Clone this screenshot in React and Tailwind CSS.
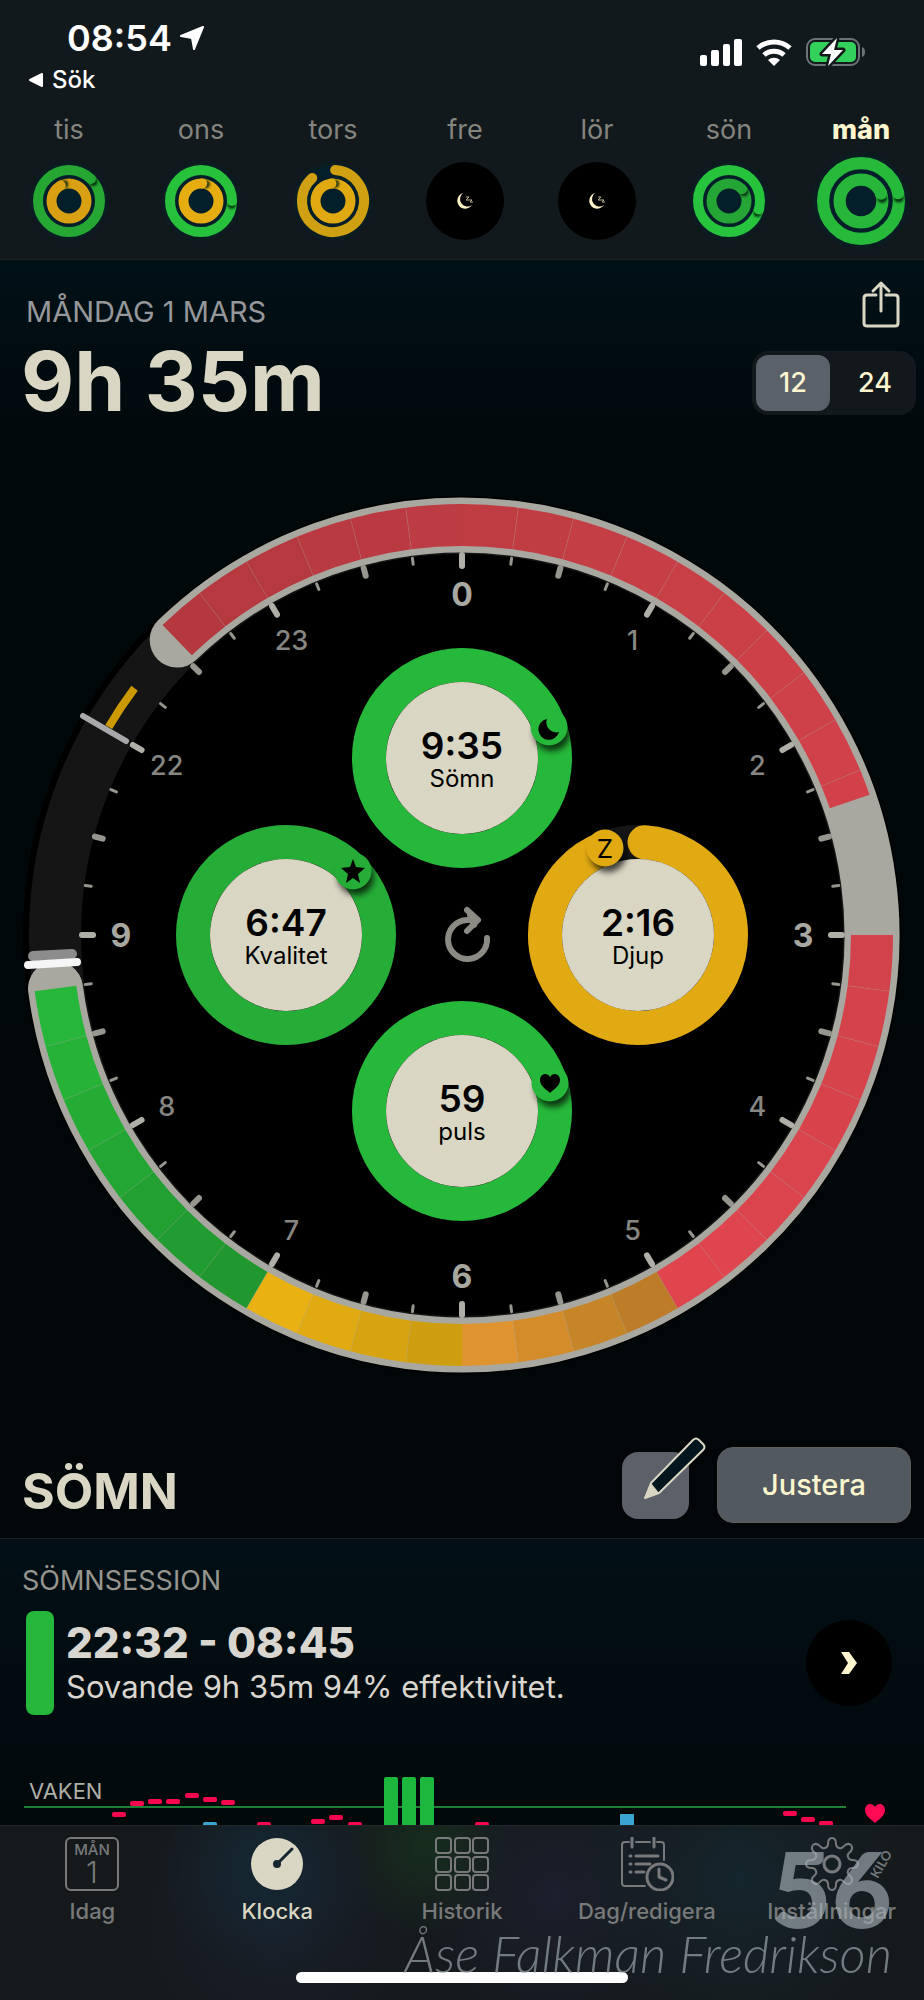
const days = [
  { label: "tis", outer: { color: "#26a733", end: 45 }, inner: { color: "#d8a012", end: -28 } },
  { label: "ons", outer: { color: "#28c13c", end: 90 }, inner: { color: "#e6ad12", end: 4 } },
  { label: "tors", outer: { color: "#d0a013", end: -42, open: true }, inner: { color: "#e0a912", end: -5 } },
  { label: "fre" },
  { label: "lör" },
  { label: "sön", outer: { color: "#28c33d", end: 106 }, inner: { color: "#25a535", end: 48 } },
  { label: "mån", active: true, outer: { color: "#27b93a", end: 78 }, inner: { color: "#27b53a", end: 70 } },
];

const CX = 462;
const CY = 935;

const segments = [
  { from: -44, to: -37.5, color: "#b4383e" },
  { from: -37.5, to: -30, color: "#b5393f" },
  { from: -30, to: -22.5, color: "#b73940" },
  { from: -22.5, to: -15, color: "#b93a40" },
  { from: -15, to: -7.5, color: "#bb3a41" },
  { from: -7.5, to: 0, color: "#bd3b42" },
  { from: 0, to: 7.5, color: "#bf3c43" },
  { from: 7.5, to: 15, color: "#c13d44" },
  { from: 15, to: 22.5, color: "#c43e45" },
  { from: 22.5, to: 30, color: "#c73f46" },
  { from: 30, to: 37.5, color: "#c93f46" },
  { from: 37.5, to: 45, color: "#cb4047" },
  { from: 45, to: 52.5, color: "#cd4047" },
  { from: 52.5, to: 60, color: "#cf4148" },
  { from: 60, to: 67.5, color: "#d14149" },
  { from: 67.5, to: 71, color: "#d24149" },
  { from: 90, to: 97.5, color: "#d2424a" },
  { from: 97.5, to: 105, color: "#d4434b" },
  { from: 105, to: 112.5, color: "#d6434b" },
  { from: 112.5, to: 120, color: "#d8434b" },
  { from: 120, to: 127.5, color: "#da444c" },
  { from: 127.5, to: 135, color: "#dc444d" },
  { from: 135, to: 142.5, color: "#de454e" },
  { from: 142.5, to: 150, color: "#e0454e" },
  { from: 150, to: 157.5, color: "#bd7c27" },
  { from: 157.5, to: 165, color: "#c78529" },
  { from: 165, to: 172.5, color: "#d48c2b" },
  { from: 172.5, to: 180, color: "#e0942f" },
  { from: 180, to: 187.5, color: "#cf9d10" },
  { from: 187.5, to: 195, color: "#d8a311" },
  { from: 195, to: 202.5, color: "#e1aa11" },
  { from: 202.5, to: 210, color: "#eab112" },
  { from: 210, to: 217.5, color: "#21972f" },
  { from: 217.5, to: 225, color: "#219c30" },
  { from: 225, to: 232.5, color: "#22a132" },
  { from: 232.5, to: 240, color: "#23a633" },
  { from: 240, to: 247.5, color: "#24ac35" },
  { from: 247.5, to: 255, color: "#25b237" },
  { from: 255, to: 262.5, color: "#26b639" },
];

const hours = [
  { label: "0", angle: 0 },
  { label: "1", angle: 30 },
  { label: "2", angle: 60 },
  { label: "3", angle: 90 },
  { label: "4", angle: 120 },
  { label: "5", angle: 150 },
  { label: "6", angle: 180 },
  { label: "7", angle: 210 },
  { label: "8", angle: 240 },
  { label: "9", angle: 270 },
  { label: "22", angle: 300 },
  { label: "23", angle: 330 },
];

const metrics = [
  { value: "9:35", label: "Sömn", x: 462, y: 758, color: "#26b83a", badge: { x: 549, y: 727, icon: "moon" } },
  { value: "6:47", label: "Kvalitet", x: 286, y: 935, color: "#25ad37", badge: { x: 353, y: 871, icon: "star" } },
  { value: "2:16", label: "Djup", x: 638, y: 935, color: "#e2aa12", open: true, badge: { x: 605, y: 848, icon: "z" } },
  { value: "59", label: "puls", x: 462, y: 1111, color: "#26b83a", badge: { x: 550, y: 1083, icon: "heart" } },
];

const pulses = [
  [119, 1814], [137, 1803], [155, 1801], [173, 1801], [192, 1795], [210, 1799], [228, 1802],
  [264, 1824], [318, 1821], [336, 1817], [355, 1824], [482, 1824], [790, 1813], [808, 1819], [826, 1823],
];

const HEART = "M0 9 C-3 6 -10 2 -10 -4 C-10 -8 -7 -10 -5 -10 C-3 -10 -1 -9 0 -7 C1 -9 3 -10 5 -10 C7 -10 10 -8 10 -4 C10 2 3 6 0 9 Z";

function polar(cx, cy, r, angle) {
  const a = (angle * Math.PI) / 180;
  return [cx + r * Math.sin(a), cy - r * Math.cos(a)];
}

function arc(cx, cy, r, from, to) {
  const [x1, y1] = polar(cx, cy, r, from);
  const [x2, y2] = polar(cx, cy, r, to);
  return `M${x1} ${y1} A${r} ${r} 0 ${to - from > 180 ? 1 : 0} 1 ${x2} ${y2}`;
}

function SmallRing({ r, color, end, open }) {
  const [x, y] = polar(0, 0, r, end);
  const [sx, sy] = polar(0, 0, r, end + (r > 20 ? 7 : 12));
  return (
    <g>
      {open ? (
        <path d={arc(0, 0, r, 4, 360 + end)} fill="none" stroke={color} strokeWidth="10" strokeLinecap="round" />
      ) : (
        <>
          <circle r={r} fill="none" stroke={color} strokeWidth="10" />
          <circle cx={sx} cy={sy} r="4" fill="#021" opacity="0.85" filter="url(#tight)" />
          <circle cx={x} cy={y} r="5" fill={color} />
        </>
      )}
    </g>
  );
}

function DayRings({ day }) {
  if (!day.outer) {
    return (
      <svg viewBox="-44 -44 88 88" className="size-[88px]" aria-hidden="true">
        <circle r="39" fill="#000" />
        <path d="M-2 -8 A8 8 0 1 0 7 4 A7 7 0 0 1 -2 -8 Z" fill="#fff3c9" />
        <path d="M1 -4 h3 l-3 3 h3 M4 -1 h3 l-2 2 h3" fill="none" stroke="#b8b092" strokeWidth="1" />
      </svg>
    );
  }
  return (
    <svg
      viewBox={day.active ? "-36 -36 72 72" : "-44 -44 88 88"}
      className="size-[88px] overflow-visible"
      aria-hidden="true"
    >
      <circle r="37" fill="#03202a" filter="url(#soft)" />
      <circle r="35" fill="#03202a" />
      <SmallRing r={31} {...day.outer} />
      <SmallRing r={17.5} {...day.inner} />
    </svg>
  );
}

function StatusIcons() {
  return (
    <svg viewBox="0 0 166 30" className="mt-[37px] mr-[58px] h-[30px] w-[166px]" aria-hidden="true">
      <g fill="#fff">
        <rect x="0" y="18" width="7" height="11" rx="2" />
        <rect x="11" y="13" width="8" height="16" rx="2" />
        <rect x="23" y="7" width="7" height="22" rx="2" />
        <rect x="34" y="2" width="8" height="27" rx="2" />
        <path d="M74 29 L68 23 A9 9 0 0 1 80 23 Z" />
      </g>
      <path d="M58 11 A24 24 0 0 1 90 11" fill="none" stroke="#fff" strokeWidth="5" />
      <path d="M64 18 A15 15 0 0 1 84 18" fill="none" stroke="#fff" strokeWidth="5" />
      <rect x="107" y="2" width="52" height="26" rx="8" fill="none" stroke="#6d7274" strokeWidth="2" />
      <path d="M162 10 C166 11 166 19 162 20 Z" fill="#6d7274" />
      <rect x="110" y="5" width="46" height="20" rx="5" fill="#33d15b" />
      <path
        d="M137 1 L122 17 H131 L128 29 L143 13 H134 Z"
        fill="#fff"
        stroke="#12191c"
        strokeWidth="5"
        strokeLinejoin="round"
        paintOrder="stroke"
      />
    </svg>
  );
}

function Header() {
  return (
    <header className="overflow-hidden border-b border-[#21211f] bg-[#12191c] pb-[14px]">
      <svg className="absolute size-0" aria-hidden="true">
        <defs>
          <filter id="soft" x="-50%" y="-50%" width="200%" height="200%">
            <feGaussianBlur stdDeviation="3" />
          </filter>
          <filter id="tight" x="-50%" y="-50%" width="200%" height="200%">
            <feGaussianBlur stdDeviation="1" />
          </filter>
        </defs>
      </svg>
      <div className="flex justify-between">
        <div className="pt-[18px]">
          <div className="flex items-center gap-2 pl-[67px] text-[36px] leading-10 font-semibold text-white">
            <span>08:54</span>
            <svg viewBox="0 0 24 24" className="size-6" aria-hidden="true">
              <path d="M1 10 L23 1 L14 23 L12 12 Z" fill="#fff" stroke="#fff" strokeWidth="2" strokeLinejoin="round" />
            </svg>
          </div>
          <a href="#sok" className="mt-2 flex items-center gap-2 pl-7 text-[24px] leading-7 font-medium text-white">
            <svg viewBox="0 0 16 16" className="size-4" aria-hidden="true">
              <path d="M2 8 L14 2 V14 Z" fill="#fff" stroke="#fff" strokeWidth="2" strokeLinejoin="round" />
            </svg>
            Sök
          </a>
        </div>
        <StatusIcons />
      </div>
      <div className="-mr-[3px] mt-5 grid grid-cols-7 pl-[3px]">
        {days.map((day) => (
          <button
            key={day.label}
            type="button"
            aria-pressed={Boolean(day.active)}
            className={`flex flex-col items-center gap-[11px] text-[27px] leading-8 ${
              day.active ? "font-extrabold text-[#fdf6cf]" : "text-[#85857f]"
            }`}
          >
            <span>{day.label}</span>
            <DayRings day={day} />
          </button>
        ))}
      </div>
    </header>
  );
}

function Summary() {
  return (
    <section className="pr-2 pl-[26px] pt-5">
      <div className="flex h-[50px] items-end justify-between">
        <h2 className="text-[29px] leading-9 text-[#96979a]">MÅNDAG 1 MARS</h2>
        <button type="button" aria-label="Dela" className="mr-4 pb-[2px]">
          <svg viewBox="0 0 38 48" className="h-12 w-[38px]" fill="none" stroke="#d9d6c3" strokeWidth="3" strokeLinecap="round" strokeLinejoin="round">
            <path d="M14 15 H5 Q2 15 2 18 V43 Q2 46 5 46 H33 Q36 46 36 43 V18 Q36 15 33 15 H24" />
            <path d="M19 31 V3 M11 11 L19 3 L27 11" />
          </svg>
        </button>
      </div>
      <div className="mt-1 flex items-center justify-between">
        <h1 className="-ml-[5px] text-[82px] leading-[96px] font-bold text-[#d9d6c3]">9h 35m</h1>
        <div className="mt-[2px] flex h-16 gap-2 rounded-2xl bg-[#12181b] p-1 text-[27px] font-medium text-[#fdf6cf]">
          <button type="button" aria-pressed="true" className="w-[74px] rounded-xl bg-[#5a616b]">12</button>
          <button type="button" aria-pressed="false" className="w-[74px] rounded-xl">24</button>
        </div>
      </div>
    </section>
  );
}

function Badge({ x, y, icon, color }) {
  return (
    <g transform={`translate(${x} ${y})`}>
      <circle cx="3" cy="6" r="18" fill="#000" opacity="0.7" filter="url(#soft)" />
      <circle r="18.5" fill={color} />
      {icon === "moon" && <path d="M-2 -8 A10.5 10.5 0 1 0 10 5 A10 10 0 0 1 -2 -8 Z" fill="#000" />}
      {icon === "star" && (
        <path d="M0 -12 L3 -4 L12 -3 L5 3 L7 12 L0 7 L-7 12 L-5 3 L-12 -3 L-3 -4 Z" fill="#000" />
      )}
      {icon === "heart" && <path d={HEART} fill="#000" transform="translate(0 1)" />}
      {icon === "z" && (
        <text y="10" textAnchor="middle" fontSize="26" fill="#000">Z</text>
      )}
    </g>
  );
}

function Clock() {
  return (
    <svg viewBox="0 480 924 910" className="mt-[50px] block w-full" role="img" aria-label="Sömnklocka">
      <circle cx={CX} cy={CY} r="439" fill="#000" />
      <circle cx={CX} cy={CY} r="407" fill="none" stroke="#151515" strokeWidth="52" />
      <path d={arc(CX, CY, 410, -44, 262.5)} fill="none" stroke="#a9a8a0" strokeWidth="55" strokeLinecap="round" />
      {segments.map((s) => (
        <path key={s.from} d={arc(CX, CY, 410, s.from, s.to)} fill="none" stroke={s.color} strokeWidth="42" />
      ))}
      {segments.filter((s) => s.from % 7.5 === 0 && s.from % 90 !== 0).map((s) => {
        const [x1, y1] = polar(CX, CY, 389, s.from);
        const [x2, y2] = polar(CX, CY, 431, s.from);
        return <line key={s.from} x1={x1} y1={y1} x2={x2} y2={y2} stroke="#a9a8a0" opacity="0.2" />;
      })}

      {Array.from({ length: 48 }, (_, i) => {
        const angle = i * 7.5;
        const quarter = i % 12 === 0;
        const hour = i % 4 === 0;
        const half = i % 2 === 0;
        const [x1, y1] = polar(CX, CY, 380, angle);
        const [x2, y2] = polar(CX, CY, quarter ? 369 : hour ? 370 : half ? 372 : 374, angle);
        return (
          <line
            key={angle}
            x1={x1}
            y1={y1}
            x2={x2}
            y2={y2}
            stroke={hour ? "#b0afa7" : "#96958e"}
            strokeWidth={half ? 6 : 3}
            strokeLinecap="round"
          />
        );
      })}
      {hours.map((h) => {
        const [x, y] = polar(CX, CY, 341, h.angle);
        const main = h.angle % 90 === 0;
        return (
          <text
            key={h.label}
            x={x}
            y={y + (main ? 12 : 10)}
            textAnchor="middle"
            fontSize={main ? 32 : 27}
            fontWeight={main ? 700 : 500}
            fill={main ? "#a9a8a0" : "#878682"}
          >
            {h.label}
          </text>
        );
      })}

      <path d={arc(CX, CY, 410, -59.5, -53)} fill="none" stroke="#cc9900" strokeWidth="8" />
      <line x1="83" y1="716" x2="126" y2="741" stroke="#a9a8ab" strokeWidth="6" strokeLinecap="round" />
      <line x1="33" y1="956" x2="72" y2="954" stroke="#8c8c8c" strokeWidth="10" strokeLinecap="round" />
      <line x1="28" y1="965" x2="77" y2="962" stroke="#f6f6f6" strokeWidth="8" strokeLinecap="round" />

      {metrics.map((m) => (
        <g key={m.label}>
          {m.open ? (
            <>
              <circle cx={m.x} cy={m.y} r="93" fill="none" stroke="#151515" strokeWidth="34" />
              <path d={arc(m.x, m.y, 93, 4, 339)} fill="none" stroke={m.color} strokeWidth="34" strokeLinecap="round" />
            </>
          ) : (
            <circle cx={m.x} cy={m.y} r="93" fill="none" stroke={m.color} strokeWidth="34" />
          )}
          <circle cx={m.x} cy={m.y} r="76" fill="#d9d6c3" />
          <Badge {...m.badge} color={m.color} />
          <text x={m.x} y={m.y + 1} textAnchor="middle" fontSize="37" fontWeight="600" fill="#000">{m.value}</text>
          <text x={m.x} y={m.y + 29} textAnchor="middle" fontSize="24" fill="#000">{m.label}</text>
        </g>
      ))}

      <g fill="none" stroke="#8b8a84" strokeWidth="6" strokeLinecap="round" strokeLinejoin="round">
        <path d="M487 938 A19.5 19.5 0 1 1 467 920 H474" />
        <path d="M467 910 L478 920 L467 931 M470 915 L474 925" />
      </g>
    </svg>
  );
}

function SleepSection() {
  return (
    <>
      <section className="flex items-center justify-between border-b border-[#1c2022] pr-[13px] pb-[15px] pl-[22px] pt-[57px]">
        <h2 className="self-end pb-[2px] text-[50px] leading-[60px] font-bold text-[#d9d6c3]">SÖMN</h2>
        <div className="flex items-center gap-7">
          <button type="button" aria-label="Redigera" className="relative size-[67px] rounded-2xl bg-[#5b6069]">
            <svg viewBox="0 0 64 64" className="absolute -top-4 left-[22px] size-16">
              <path d="M7 47 L49 4 Q52 1 55 4 L59 8 Q62 11 59 14 L15 57 L1 62 Z" fill="#03161d" stroke="#d9d6c3" strokeWidth="2" strokeLinejoin="round" />
              <path d="M7 47 L15 57 L1 62 Z" fill="#d9d6c3" />
            </svg>
          </button>
          <button type="button" className="h-[76px] w-[194px] rounded-2xl border border-[#605e5b] bg-[#535960] text-[29px] font-medium text-[#fcf6cf]">
            Justera
          </button>
        </div>
      </section>
      <section className="bg-linear-to-b from-[#020f16] to-[#02090b] pt-[25px]">
        <h3 className="pl-[22px] text-[27px] leading-[34px] text-[#96968f]">SÖMNSESSION</h3>
        <div className="mt-[13px] flex items-center gap-3 pr-8 pl-[26px]">
          <div className="h-[104px] w-7 rounded-lg bg-[#26b83a]" />
          <div className="flex-1 text-[#d9d6cf]">
            <p className="text-[42px] leading-[48px] font-extrabold">22:32 - 08:45</p>
            <p className="text-[31px] leading-10">Sovande 9h 35m 94% effektivitet.</p>
          </div>
          <button type="button" aria-label="Visa session" className="grid size-[86px] place-items-center rounded-full bg-black">
            <svg viewBox="0 0 18 22" className="h-[22px] w-[18px]">
              <path d="M1 0 H9 L17 11 L9 22 H1 L8 11 Z" fill="#fff6cf" />
            </svg>
          </button>
        </div>
        <svg viewBox="0 1765 924 60" className="mt-[50px] block w-full" role="img" aria-label="Sömnfaser">
          <line x1="24" y1="1807" x2="846" y2="1807" stroke="#1d8035" strokeWidth="2" />
          <text x="29" y="1799" fontSize="22" fill="#b0afa7">VAKEN</text>
          {[384, 402, 420].map((x) => (
            <rect key={x} x={x} y="1777" width="14" height="60" rx="2" fill="#1db73e" />
          ))}
          {pulses.map(([x, y]) => (
            <rect key={x} x={x - 7} y={y - 2} width="14" height="5" rx="2" fill="#f5084f" />
          ))}
          <rect x="203" y="1822" width="14" height="20" rx="2" fill="#3aa5d1" />
          <rect x="620" y="1814" width="14" height="20" rx="1" fill="#3aa5d1" />
          <path d={HEART} fill="#ff0a55" transform="translate(875 1814)" />
        </svg>
      </section>
    </>
  );
}

function TabIcon({ name }) {
  if (name === "klocka") {
    return (
      <svg viewBox="0 0 54 54" className="size-[54px]" aria-hidden="true">
        <circle cx="27" cy="27" r="26" fill="#d9d6c3" />
        <circle cx="27" cy="27" r="4" fill="#142630" />
        <path d="M27 27 L42 12" stroke="#142630" strokeWidth="3" strokeLinecap="round" />
      </svg>
    );
  }
  return (
    <svg viewBox="0 0 54 54" className="size-[54px]" fill="none" stroke="#77797a" strokeWidth="2" strokeLinecap="round" strokeLinejoin="round" aria-hidden="true">
      {name === "idag" && (
        <>
          <rect x="1" y="1" width="52" height="52" rx="5" />
          <text x="27" y="18" textAnchor="middle" fontSize="15" fill="#77797a" stroke="none">MÅN</text>
          <text x="27" y="46" textAnchor="middle" fontSize="30" fontWeight="300" fill="#77797a" stroke="none">1</text>
        </>
      )}
      {name === "historik" &&
        [1, 20, 38].map((y) => [1, 20, 38].map((x) => <rect key={`${x}-${y}`} x={x} y={y} width="15" height="15" rx="3" />))}
      {name === "dag" && (
        <>
          <path d="M25 49 H5 Q2 49 2 46 V8 Q2 5 5 5 H9 M16 5 H30 M37 5 H41 Q44 5 44 8 V23" />
          <path d="M12 1 V10 M34 1 V10" strokeWidth="3" />
          <path d="M16 19 H38 M16 27 H30 M16 35 H24 M10 19 H11 M10 27 H11 M10 35 H11" strokeWidth="3" />
          <circle cx="40" cy="40" r="13" strokeWidth="3" />
          <path d="M39 32 V40 L46 43" strokeWidth="3" />
        </>
      )}
      {name === "installningar" && (
        <>
          <path d="M23 7 Q23 1 27 1 Q31 1 31 7 Q31 10 34 11 Q36 12 38 10 Q42 5 46 8 Q49 12 44 16 Q42 18 43 20 Q44 23 47 23 Q53 23 53 27 Q53 31 47 31 Q44 31 43 34 Q42 36 44 38 Q49 42 46 46 Q42 49 38 44 Q36 42 34 43 Q31 44 31 47 Q31 53 27 53 Q23 53 23 47 Q23 44 20 43 Q18 42 16 44 Q12 49 8 46 Q5 42 10 38 Q12 36 11 34 Q10 31 7 31 Q1 31 1 27 Q1 23 7 23 Q10 23 11 20 Q12 18 10 16 Q5 12 8 8 Q12 5 16 10 Q18 12 20 11 Q23 10 23 7 Z" />
          <circle cx="27" cy="27" r="8" strokeWidth="3" />
        </>
      )}
    </svg>
  );
}

const tabs = [
  { id: "idag", label: "Idag" },
  { id: "klocka", label: "Klocka", active: true },
  { id: "historik", label: "Historik" },
  { id: "dag", label: "Dag/redigera" },
  { id: "installningar", label: "Inställningar" },
];

function TabBar() {
  return (
    <nav
      className="relative border-t border-[#22282a] bg-[#15191b] bg-[radial-gradient(circle_at_29%_25%,#142833_0%,transparent_16%),radial-gradient(circle_at_46%_12%,#172d1e_0%,transparent_17%),radial-gradient(circle_at_80%_30%,#15252d_0%,transparent_22%),radial-gradient(circle_at_60%_40%,#1c1f2c_0%,transparent_26%),radial-gradient(circle_at_30%_55%,#191e29_0%,transparent_24%)] pt-[11px] pb-[17px]"
      aria-label="Huvudmeny"
    >
      <div className="grid grid-cols-5">
        {tabs.map((tab) => (
          <a
            key={tab.id}
            href={`#${tab.id}`}
            aria-current={tab.active ? "page" : undefined}
            className={`flex flex-col items-center gap-2 text-[22px] leading-6 font-medium ${
              tab.active ? "text-[#d9d6c3]" : "text-[#77797a]"
            }`}
          >
            <TabIcon name={tab.id} />
            <span>{tab.label}</span>
          </a>
        ))}
      </div>
      <div className="mx-auto mt-[49px] h-[11px] w-[36%] rounded-full bg-white" />
      <div className="pointer-events-none absolute right-8 bottom-4 flex flex-col items-end whitespace-nowrap text-[#a5afb5]/65">
        <div className="relative font-['Lato',sans-serif] text-[104px] leading-[72px] font-black">
          56
          <span className="absolute top-1 -right-1 -rotate-60 text-[13px] leading-4 font-bold">KILO</span>
        </div>
        <div className="font-['Lato',cursive] text-[51px] leading-[60px] font-light italic">Åse Falkman Fredrikson</div>
      </div>
    </nav>
  );
}

export default function App() {
  return (
    <div className="min-h-dvh bg-black font-['Inter',sans-serif]">
      <Header />
      <main className="bg-linear-to-b from-[#011118] via-[#01080a] via-12% to-[#010608]">
        <Summary />
        <Clock />
        <SleepSection />
      </main>
      <TabBar />
    </div>
  );
}
